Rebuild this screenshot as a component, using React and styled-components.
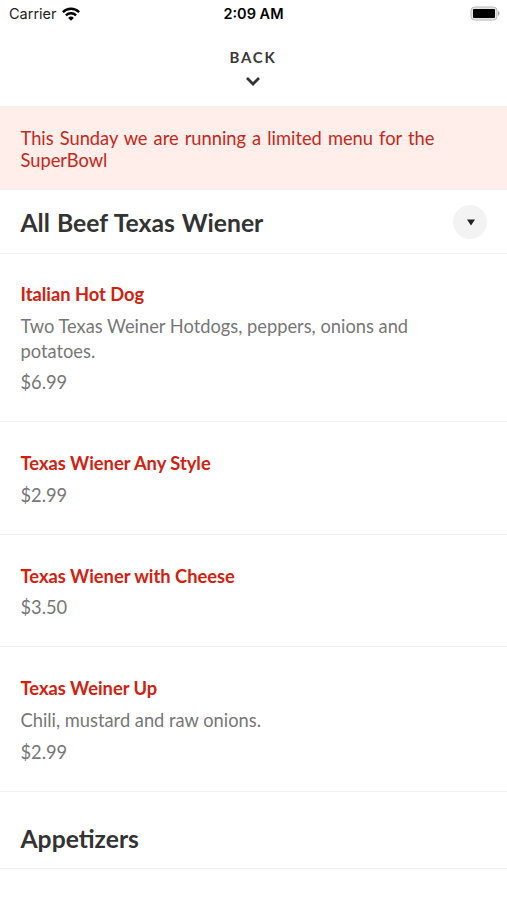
import styled, { createGlobalStyle } from 'styled-components';

const GlobalStyle = createGlobalStyle`
  * {
    box-sizing: border-box;
  }
  body {
    margin: 0;
    background-color: #ffffff;
    font-family: Lato, sans-serif;
  }
`;

const sections = [
  {
    title: 'All Beef Texas Wiener',
    open: true,
    items: [
      {
        name: 'Italian Hot Dog',
        description: 'Two Texas Weiner Hotdogs, peppers, onions and potatoes.',
        price: '$6.99',
      },
      { name: 'Texas Wiener Any Style', price: '$2.99' },
      { name: 'Texas Wiener with Cheese', price: '$3.50' },
      {
        name: 'Texas Weiner Up',
        description: 'Chili, mustard and raw onions.',
        price: '$2.99',
      },
    ],
  },
  { title: 'Appetizers', items: [] },
];

const Screen = styled.div`
  width: 507px;
  height: 900px;
  overflow: hidden;
  background-color: #ffffff;
`;

const StatusBar = styled.div`
  display: grid;
  grid-template-columns: 1fr auto 1fr;
  align-items: center;
  height: 27px;
  padding: 0 7px 0 9px;
  font-family: Inter, sans-serif;
  font-size: 14.5px;
  color: #000000;
`;

const Carrier = styled.div`
  display: flex;
  align-items: center;
  gap: 5px;
  color: #222222;
`;

const Clock = styled.div`
  padding-right: 2px;
  font-weight: 600;
`;

const Battery = styled.svg`
  justify-self: end;
`;

const Back = styled.button`
  display: flex;
  flex-direction: column;
  align-items: center;
  gap: 9px;
  width: 100%;
  height: 80px;
  padding: 20px 1px 0 0;
  border: none;
  border-bottom: 1px solid #f3eeee;
  background: none;
  font-family: inherit;
  font-size: 15px;
  font-weight: 700;
  line-height: 20px;
  letter-spacing: 1.7px;
  color: #3a3a3a;
`;

const Notice = styled.div`
  height: 83px;
  padding: 20px 60px 0 20.5px;
  background-color: #ffeeea;
  font-size: 18.3px;
  line-height: 22px;
  word-spacing: 1.4px;
  color: #c4281a;
`;

const SectionHeader = styled.div`
  display: flex;
  align-items: center;
  justify-content: space-between;
  height: ${(props) => (props.$first ? 63.7 : 77.7)}px;
  padding: ${(props) => (props.$first ? '2px' : '16px')} 20px 0 20.5px;
  border-bottom: 1px solid #f0f0f0;
`;

const SectionTitle = styled.h2`
  margin: 0;
  padding-top: 1.4px;
  font-size: 24.7px;
  font-weight: 700;
  line-height: 30px;
  word-spacing: 1px;
  color: #333333;
`;

const Toggle = styled.button`
  display: flex;
  align-items: center;
  justify-content: center;
  width: 34px;
  height: 34px;
  padding: 0 0 0 1px;
  border: none;
  border-radius: 50%;
  background-color: #f3f3f3;
`;

const Item = styled.div`
  padding: 28.8px 60px 26.5px 20.5px;
  border-bottom: 1px solid #f0f0f0;
  font-size: 18.3px;
  line-height: 24.5px;
  color: #777777;
`;

const ItemName = styled.div`
  font-weight: 700;
  color: #d3200f;
`;

const ItemText = styled.div`
  margin-top: 7.2px;
`;

const App = () => {
  return (
    <>
      <GlobalStyle />
      <Screen>
        <StatusBar>
          <Carrier>
            <span>Carrier</span>
            <svg width="18" height="14" viewBox="0 0 18 14">
              <path
                d="M.9 5.1a11.6 11.6 0 0 1 16.2 0M3.9 8.3a7.3 7.3 0 0 1 10.2 0"
                fill="none"
                stroke="#000000"
                strokeWidth="2.4"
              />
              <path d="M9 13.8 6.2 10.9a4 4 0 0 1 5.6 0Z" fill="#000000" />
            </svg>
          </Carrier>
          <Clock>2:09 AM</Clock>
          <Battery width="30" height="15" viewBox="0 0 30 15">
            <rect x="1" y="1" width="26" height="13" rx="3.8" fill="#e6e6e6" stroke="#b8b8b8" />
            <rect x="3" y="3" width="22" height="9" rx="1" fill="#000000" />
            <path d="M28 5c2 .8 2 4.2 0 5Z" fill="#a8a8a8" />
          </Battery>
        </StatusBar>
        <Back>
          BACK
          <svg width="16" height="11" viewBox="0 0 16 11">
            <path d="m2 2 6 6 6-6" fill="none" stroke="#333333" strokeWidth="2.7" />
          </svg>
        </Back>
        <Notice>This Sunday we are running a limited menu for the SuperBowl</Notice>
        {sections.map((section, index) => (
          <div key={section.title}>
            <SectionHeader $first={index === 0}>
              <SectionTitle>{section.title}</SectionTitle>
              {section.open && (
                <Toggle aria-label="Toggle section">
                  <svg width="10" height="7" viewBox="0 0 10 7">
                    <path d="M1 .5h8L5 6.5Z" fill="#222222" />
                  </svg>
                </Toggle>
              )}
            </SectionHeader>
            {section.items.map((item) => (
              <Item key={item.name}>
                <ItemName>{item.name}</ItemName>
                {item.description && <ItemText>{item.description}</ItemText>}
                <ItemText>{item.price}</ItemText>
              </Item>
            ))}
          </div>
        ))}
      </Screen>
    </>
  );
};

export default App;
